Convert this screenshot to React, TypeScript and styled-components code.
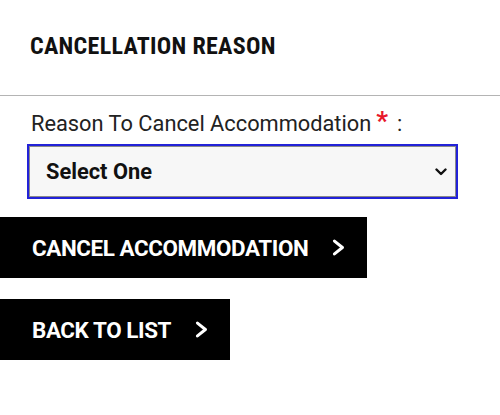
import styled, { createGlobalStyle } from "styled-components";

const GlobalStyle = createGlobalStyle`
  body {
    margin: 0;
    background: #ffffff;
    font-family: Roboto, "Liberation Sans", Arial, sans-serif;
    color: #111111;
  }
`;

const Chevron = ({ size = 17 }: { size?: number }) => (
  <svg width={size * 0.76} height={size} viewBox="0 0 13 17" fill="none">
    <polyline
      points="2.5,2 10.5,8.5 2.5,15"
      stroke="#ffffff"
      strokeWidth="3"
      strokeLinecap="round"
      strokeLinejoin="round"
    />
  </svg>
);

const App = () => {
  return (
    <>
      <GlobalStyle />
      <Page>
        <Header>
          <Title>Cancellation Reason</Title>
        </Header>
        <Form>
          <Label htmlFor="reason">
            Reason To Cancel Accommodation<Required>*</Required>:
          </Label>
          <SelectWrap>
            <Select id="reason" defaultValue="">
              <option value="">Select One</option>
              <option value="plans">Change of plans</option>
              <option value="other">Other</option>
            </Select>
            <SelectArrow width="12" height="8" viewBox="0 0 12 8" fill="none">
              <polyline
                points="1.5,1.5 6,6 10.5,1.5"
                stroke="#111111"
                strokeWidth="2.4"
                strokeLinecap="round"
                strokeLinejoin="round"
              />
            </SelectArrow>
          </SelectWrap>
        </Form>
        <Actions>
          <ActionButton type="button">
            Cancel Accommodation
            <Chevron />
          </ActionButton>
          <ActionButton type="button">
            Back To List
            <Chevron />
          </ActionButton>
        </Actions>
      </Page>
    </>
  );
};

export default App;

const Page = styled.div`
  width: 500px;
  height: 415px;
  overflow: hidden;
`;

const Header = styled.div`
  height: 96px;
  padding: 0 30px 4px;
  border-bottom: 1.5px solid #b4b4b4;
  display: flex;
  align-items: center;
  box-sizing: border-box;
`;

const Title = styled.h2`
  margin: 0;
  font-family: "Roboto Condensed", Roboto, "Liberation Sans", sans-serif;
  font-stretch: condensed;
  font-size: 24px;
  font-weight: 700;
  text-transform: uppercase;
  letter-spacing: 0.3px;
  white-space: nowrap;
  color: #111111;
`;

const Form = styled.div`
  padding: 12px 42px 0 27px;
  display: flex;
  flex-direction: column;
  gap: 6px;
`;

const Label = styled.label`
  padding-left: 4px;
  font-size: 21.8px;
  color: #222222;
  line-height: 28px;
`;

const Required = styled.span`
  color: #e8182c;
  font-weight: 700;
  font-size: 26px;
  margin: 0 9px 0 5px;
  position: relative;
  top: -1px;
`;

const SelectWrap = styled.div`
  position: relative;
  width: 431px;
`;

const Select = styled.select`
  appearance: none;
  width: 100%;
  height: 55px;
  box-sizing: border-box;
  padding: 0 40px 0 17px;
  border: 2.5px solid #2222d8;
  box-shadow: inset 0 0 0 1px #8a8a8a;
  background: #f7f7f7;
  font-family: Roboto, "Liberation Sans", sans-serif;
  font-size: 21.8px;
  font-weight: 700;
  color: #111111;
  outline: none;
  border-radius: 0;
`;

const SelectArrow = styled.svg`
  position: absolute;
  right: 11px;
  top: 24px;
  pointer-events: none;
`;

const Actions = styled.div`
  margin-top: 18px;
  display: flex;
  flex-direction: column;
  align-items: flex-start;
  gap: 21px;
`;

const ActionButton = styled.button`
  display: inline-flex;
  align-items: center;
  gap: 24px;
  height: 61px;
  padding: 0 22px 0 32px;
  background: #000000;
  color: #ffffff;
  border: none;
  border-radius: 0;
  font-family: Roboto, "Liberation Sans", sans-serif;
  font-size: 22.4px;
  font-weight: 700;
  letter-spacing: -0.4px;
  text-transform: uppercase;
  cursor: pointer;
`;
